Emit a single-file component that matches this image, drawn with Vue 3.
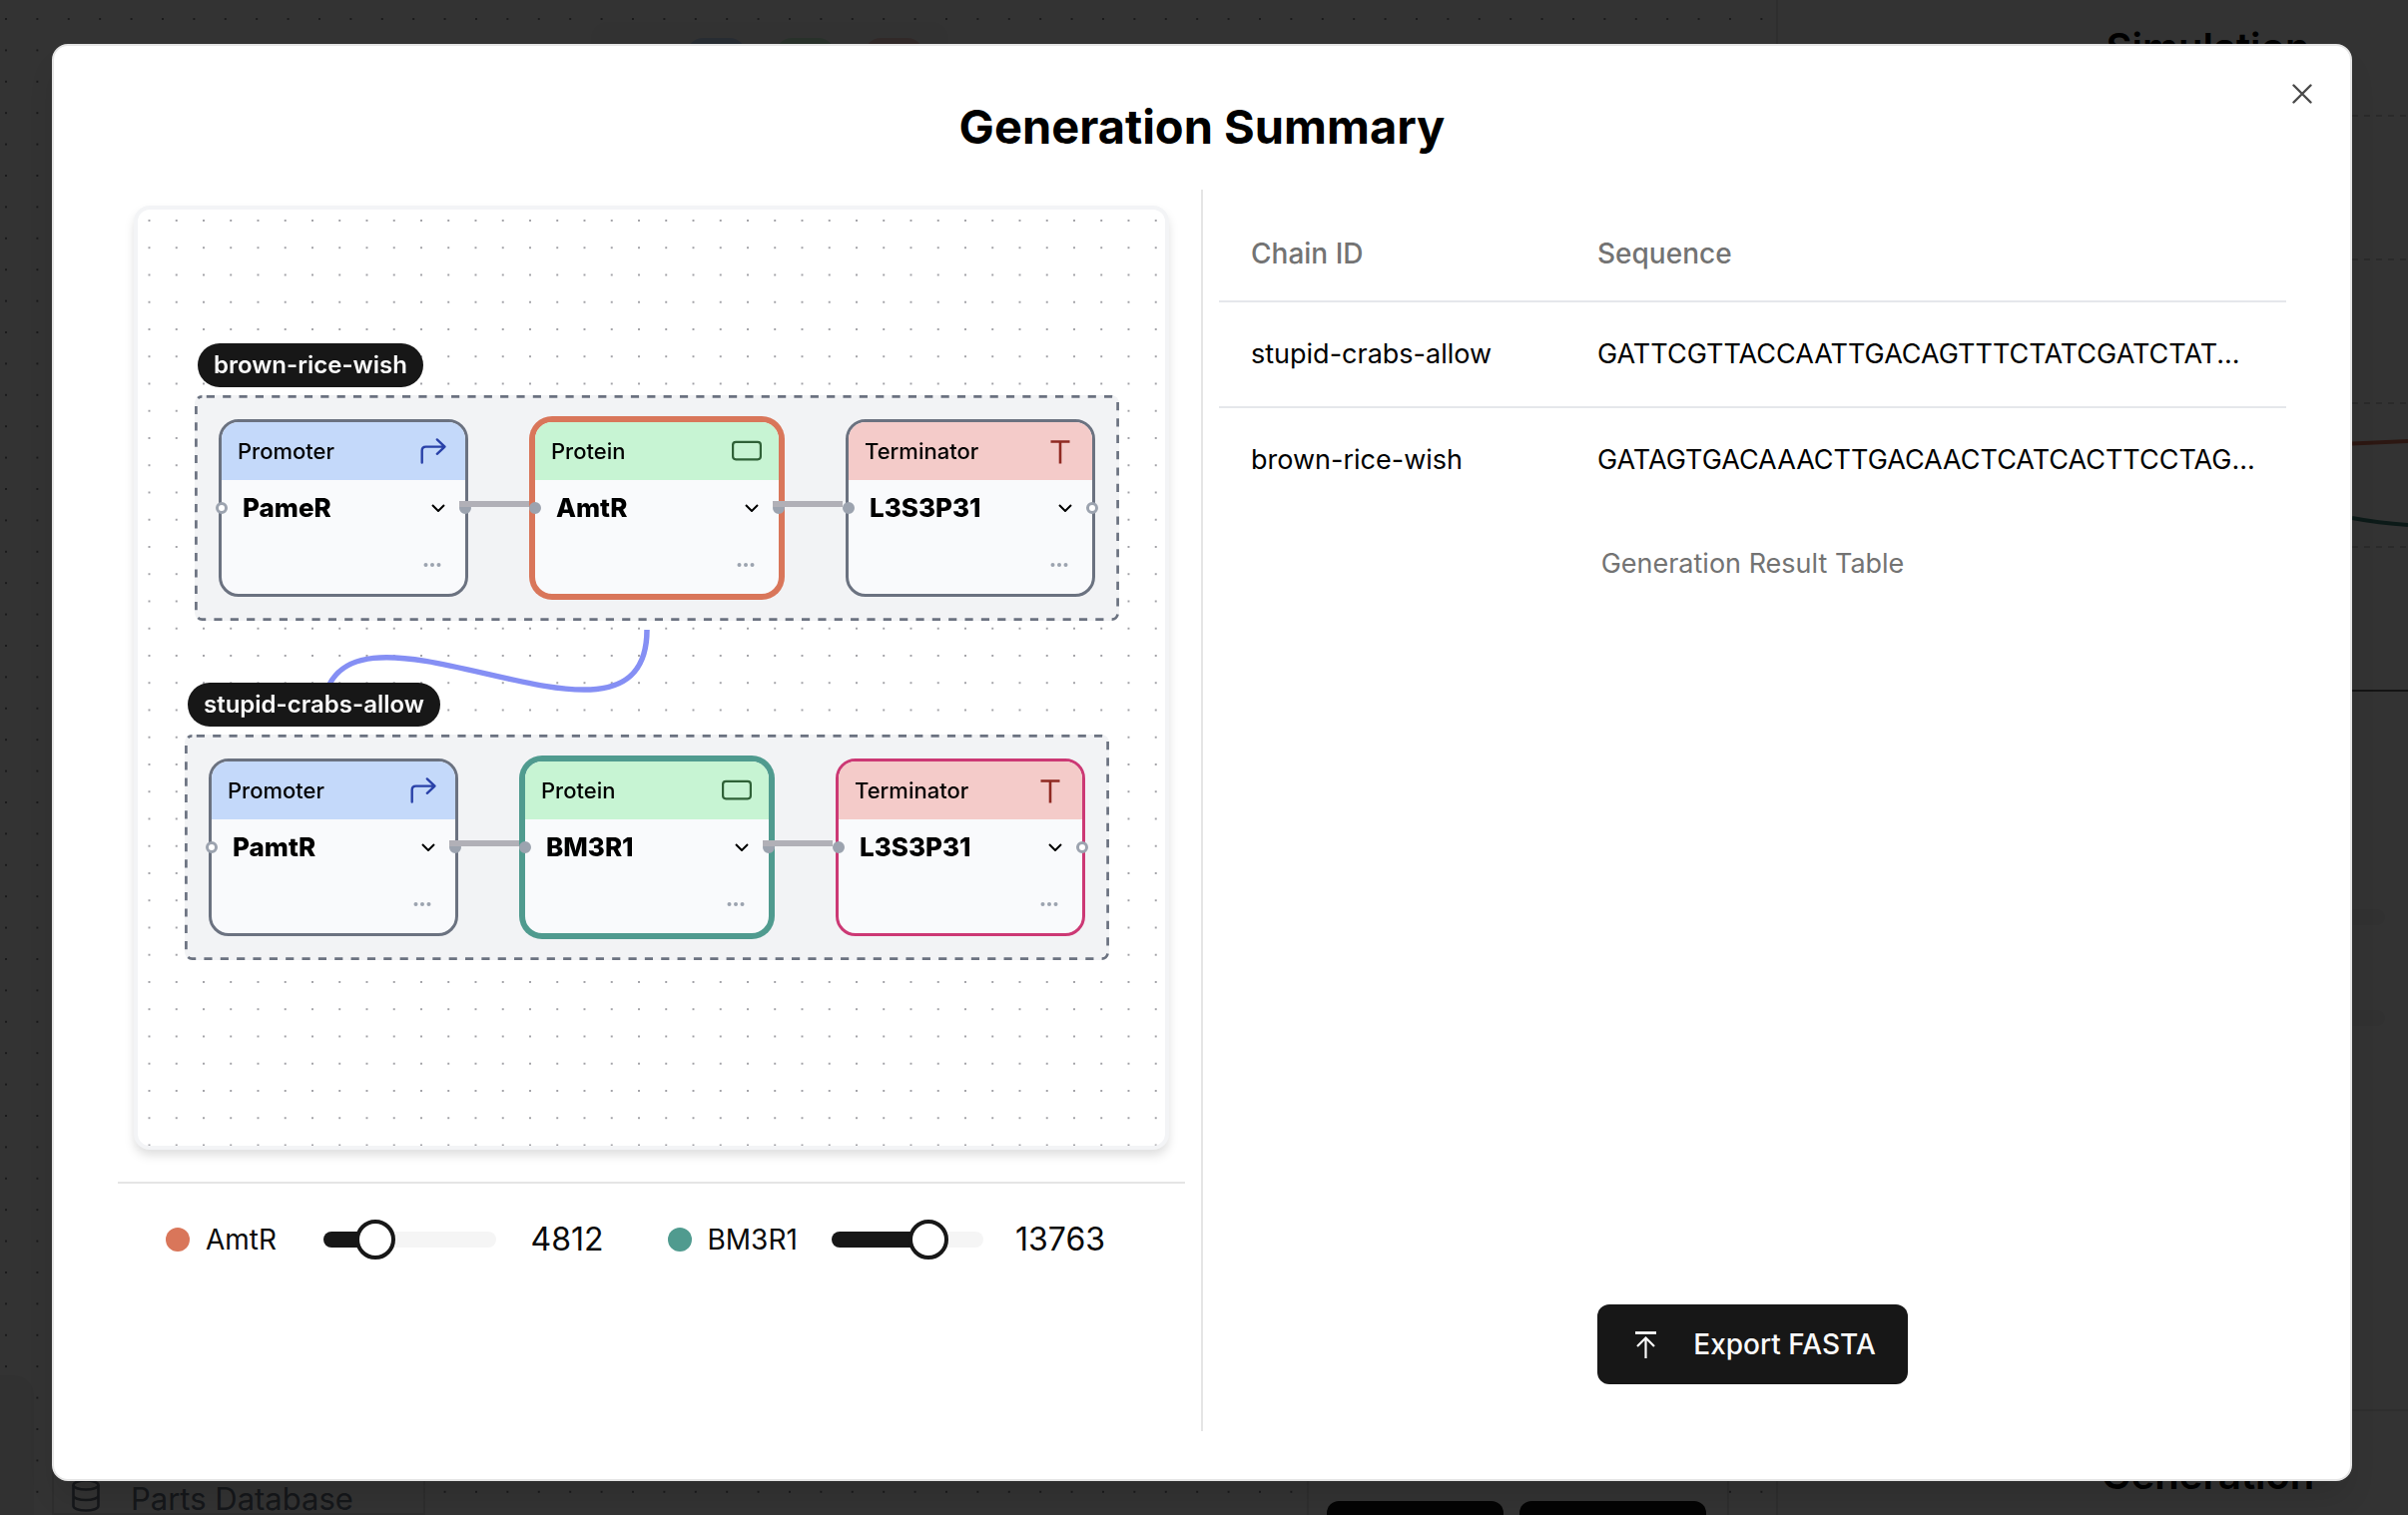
<script setup>
import { ref } from 'vue'

const chains = [
  {
    id: 'brown-rice-wish',
    x: 57,
    y: 186,
    parts: [
      { kind: 'Promoter', name: 'PameR', tone: 'plain' },
      { kind: 'Protein', name: 'AmtR', tone: 'orange' },
      { kind: 'Terminator', name: 'L3S3P31', tone: 'plain' },
    ],
  },
  {
    id: 'stupid-crabs-allow',
    x: 47,
    y: 526,
    parts: [
      { kind: 'Promoter', name: 'PamtR', tone: 'plain' },
      { kind: 'Protein', name: 'BM3R1', tone: 'teal' },
      { kind: 'Terminator', name: 'L3S3P31', tone: 'pink' },
    ],
  },
]

const rows = [
  { id: 'stupid-crabs-allow', sequence: 'GATTCGTTACCAATTGACAGTTTCTATCGATCTAT...' },
  { id: 'brown-rice-wish', sequence: 'GATAGTGACAAACTTGACAACTCATCACTTCCTAG...' },
]

const max = 20000
const proteins = ref([
  { name: 'AmtR', color: '#d9765a', value: 4812 },
  { name: 'BM3R1', color: '#509b8f', value: 13763 },
])
</script>

<template>
  <div class="page">
    <div class="workspace" aria-hidden="true">
      <section class="flow">
        <svg class="dots" width="100%" height="100%">
          <pattern id="flow-dots" x="5" y="18" width="31.4" height="31.4" patternUnits="userSpaceOnUse">
            <circle cx="1" cy="1" r="1" fill="#55555c" />
          </pattern>
          <rect width="100%" height="100%" fill="url(#flow-dots)" />
        </svg>
        <div class="palette">
          <i class="chip blue"></i><i class="chip green"></i><i class="chip red"></i>
        </div>
        <div class="dock">
          <span class="minimap"></span>
          <div class="database">
            <svg width="30" height="34" viewBox="0 0 30 34" fill="none" stroke="currentColor" stroke-width="2.6">
              <ellipse cx="15" cy="6" rx="12.5" ry="4.5" />
              <path d="M2.500 6v21c0 2.500 5.600 4.500 12.500 4.500s12.500-2 12.500-4.500V6M2.500 16.500c0 2.500 5.600 4.500 12.500 4.500s12.500-2 12.500-4.500" />
            </svg>
            <span>Parts Database</span>
          </div>
          <div class="actions"><i></i><i></i></div>
        </div>
      </section>
      <aside class="side">
        <h2>Simulation</h2>
        <svg class="chart" viewBox="0 0 56 950" width="56" height="950" fill="none">
          <g stroke="#cfcfcf" stroke-width="2" stroke-dasharray="6 6">
            <path d="M0 46h56M0 190h56M0 334h56M0 478h56" />
          </g>
          <path d="M0 622h56" stroke="#666" stroke-width="2" />
          <path d="M0 374.500L56 372" stroke="#d9765a" stroke-width="4" />
          <path d="M0 449Q26 454 56 456" stroke="#3f8378" stroke-width="4" />
          <path d="M0 849h25M0 950h25" stroke="#f3f3f3" stroke-width="16" stroke-linecap="round" />
        </svg>
        <h2 class="bottom">Generation</h2>
      </aside>
    </div>

    <div class="overlay">
      <div class="modal" role="dialog" aria-labelledby="dialog-title">
        <button class="close" aria-label="Close">
          <svg width="20" height="20" viewBox="0 0 20 20" stroke="currentColor" stroke-width="2.4" stroke-linecap="round">
            <path d="M1.500 1.500l17 17M18.500 1.500l-17 17" />
          </svg>
        </button>
        <h1 id="dialog-title">Generation Summary</h1>

        <div class="columns">
          <section class="circuit">
            <div class="board-wrap">
              <div class="board">
                <svg class="dots" width="100%" height="100%">
                  <pattern id="board-dots" x="10.500" y="10" width="27.250" height="27.250" patternUnits="userSpaceOnUse">
                    <circle cx="1" cy="1" r="0.900" fill="#77777f" />
                  </pattern>
                  <rect width="100%" height="100%" fill="url(#board-dots)" />
                  <path d="M510 421C510 584 185 345 185 510" fill="none" stroke="#858ff4" stroke-width="5.500" />
                </svg>

                <div
                  v-for="chain in chains"
                  :key="chain.id"
                  class="chain"
                  :style="{ left: chain.x + 'px', top: chain.y + 'px' }"
                >
                  <svg class="outline" width="926" height="226" fill="none">
                    <rect x="1.400" y="1.400" width="923.200" height="223.200" rx="6" stroke="#6b7280" stroke-width="2.700" stroke-dasharray="8.170 8.180" stroke-dashoffset="-4.400" />
                  </svg>
                  <span class="tag">{{ chain.id }}</span>
                  <article v-for="(part, i) in chain.parts" :key="i" class="part" :class="part.tone">
                    <header :class="part.kind.toLowerCase()">
                      <span>{{ part.kind }}</span>
                      <svg width="32" height="28" viewBox="0 0 32 28" fill="none" stroke="currentColor">
                        <path v-if="part.kind === 'Promoter'" stroke-width="2.400" stroke-linecap="round" stroke-linejoin="round" d="M4.700 25.500V13.500Q4.700 9.600 8.600 9.600H27.500M19.800 2.400L27.500 9.600L19.800 16.800" />
                        <rect v-else-if="part.kind === 'Protein'" x="2.100" y="4.900" width="27.800" height="17.400" rx="3" stroke-width="2.200" />
                        <path v-else stroke-width="2.600" d="M6.500 4.500h19M16 4.500v22" />
                      </svg>
                    </header>
                    <div class="name">
                      <select :aria-label="part.kind">
                        <option>{{ part.name }}</option>
                      </select>
                      <svg width="14" height="8" viewBox="0 0 14 8" fill="none" stroke="#000" stroke-width="2">
                        <path d="M1 1l6 6l6-6" />
                      </svg>
                    </div>
                    <div class="more">
                      <button aria-label="More options">
                        <svg width="18" height="6" viewBox="0 0 18 6" fill="#9ca3af">
                          <circle cx="2.500" cy="3" r="2" /><circle cx="9" cy="3" r="2" /><circle cx="15.500" cy="3" r="2" />
                        </svg>
                      </button>
                    </div>
                    <i class="handle left" :class="{ linked: i > 0 }"></i>
                    <i class="handle right" :class="{ linked: i < 2 }"></i>
                    <i v-if="i < 2" class="edge"></i>
                  </article>
                </div>
              </div>
            </div>

            <div class="sliders">
              <div v-for="(p, i) in proteins" :key="p.name" class="slider">
                <i class="swatch" :style="{ background: p.color }"></i>
                <label :for="'level-' + i">{{ p.name }}</label>
                <input
                  :id="'level-' + i"
                  v-model.number="p.value"
                  type="range"
                  min="0"
                  :max="max"
                  :style="{ '--fill': (p.value / max) * 100 + '%' }"
                />
                <output :for="'level-' + i">{{ p.value }}</output>
              </div>
            </div>
          </section>

          <div class="divider"></div>

          <section class="result">
            <table>
              <caption>Generation Result Table</caption>
              <thead>
                <tr><th scope="col" class="id">Chain ID</th><th scope="col">Sequence</th></tr>
              </thead>
              <tbody>
                <tr v-for="row in rows" :key="row.id">
                  <td>{{ row.id }}</td>
                  <td>{{ row.sequence }}</td>
                </tr>
              </tbody>
            </table>
            <button class="export">
              <svg width="32" height="32" viewBox="0 0 32 32" fill="none" stroke="currentColor" stroke-width="2.200">
                <path stroke-width="2.800" d="M6 4.500h21" />
                <path d="M16.500 30V10M8 18l8.500-8.500L25 18" />
              </svg>
              Export FASTA
            </button>
          </section>
        </div>
      </div>
    </div>
  </div>
</template>

<style>
body {
  background: #333;
}
</style>

<style scoped>
* {
  box-sizing: border-box;
}
.page {
  position: relative;
  min-height: 100vh;
  font-family: Inter, sans-serif;
  font-size: 28px;
  line-height: 40px;
  color: #0a0a0a;
}
button,
select,
input {
  font: inherit;
  color: inherit;
  margin: 0;
}
svg {
  display: block;
  flex: none;
}

/* Workspace behind the dialog */
.workspace {
  position: absolute;
  inset: 0;
  display: grid;
  grid-template-columns: 1fr 633px;
  overflow: hidden;
  background: #fff;
}
.flow {
  position: relative;
  display: flex;
  flex-direction: column;
  justify-content: space-between;
  min-width: 0;
}
.dots {
  position: absolute;
  inset: 0;
}
.palette {
  position: relative;
  align-self: center;
  display: flex;
  gap: 30px;
  width: 358px;
  height: 80px;
  margin: 22px 238px 0 0;
  padding: 16px 0 0 96px;
  border-radius: 16px;
  background: #f8f8f8;
}
.chip {
  width: 59px;
  height: 40px;
  border-radius: 16px;
}
.chip.blue { background: #c4d9fa; }
.chip.green { background: #c7f4d3; }
.chip.red { background: #f4cbc9; }
.dock {
  position: relative;
  display: flex;
  align-items: flex-end;
  height: 140px;
}
.minimap {
  align-self: stretch;
  width: 34px;
  border-radius: 0 20px 0 0;
  background: #f5f5f5;
}
.database {
  display: flex;
  align-items: flex-end;
  gap: 30px;
  width: 374px;
  height: 60px;
  margin-left: 18px;
  padding-left: 17px;
  border: solid #e5e5e5;
  border-width: 0 2px 2px;
  background: #fff;
  color: #6b7280;
  font-size: 31px;
  line-height: 28px;
  white-space: nowrap;
}
.actions {
  display: flex;
  gap: 16px;
  width: 423px;
  height: 60px;
  margin: 0 47px 0 auto;
  padding: 46px 20px 0 18px;
  border: solid #e5e5e5;
  border-width: 0 2px;
  background: #fff;
}
.actions i {
  width: 177px;
  border-radius: 12px 12px 0 0;
  background: #171717;
}
.actions i:last-child {
  width: 187px;
}
.side {
  display: flex;
  flex-direction: column;
  border-left: 2px solid #e5e5e5;
}
.side h2 {
  margin: 0;
  padding: 26px 0 0 230px;
  font-size: 40px;
  line-height: 44px;
  font-weight: 600;
  color: #000;
  text-align: center;
}
.chart {
  align-self: flex-end;
  overflow: visible;
}
.side .bottom {
  margin-top: auto;
  height: 106px;
  padding-top: 42px;
  border-top: 2px solid #e5e5e5;
}

/* Dialog */
.overlay {
  position: relative;
  display: flex;
  min-height: 100vh;
  padding: 44px 56px 34px 52px;
  background: rgba(0, 0, 0, 0.8);
}
.modal {
  position: relative;
  flex: 1;
  display: flex;
  flex-direction: column;
  min-width: 0;
  padding: 48px 64px;
  border: 2px solid #e5e5e5;
  border-radius: 16px;
  background: #fff;
  box-shadow: 0 20px 30px -6px rgba(0, 0, 0, 0.12);
}
h1 {
  margin: 0 0 30px;
  font-size: 47px;
  line-height: 66px;
  font-weight: 700;
  color: #000;
  text-align: center;
}
.close {
  position: absolute;
  top: 32px;
  right: 32px;
  display: grid;
  place-items: center;
  width: 32px;
  height: 32px;
  padding: 0;
  border: 0;
  background: none;
  color: #4a4a4a;
}
.columns {
  flex: 1;
  display: grid;
  grid-template-columns: minmax(0, 1fr) 2px minmax(0, 1fr);
  gap: 16px;
}
.divider {
  background: #e5e5e5;
}

/* Circuit board */
.board-wrap {
  padding: 16px;
  filter: drop-shadow(0 6px 5px rgba(0, 0, 0, 0.12));
}
.board {
  position: relative;
  min-height: 946px;
  border: 4px solid #f3f4f6;
  border-radius: 16px;
  overflow: hidden;
  background: #fff;
}
.chain {
  position: absolute;
  display: flex;
  gap: 64px;
  padding: 24px;
  border-radius: 8px;
  background: #f2f3f5;
}
.outline {
  position: absolute;
  top: 0;
  left: 0;
}
.tag {
  position: absolute;
  top: -52px;
  left: 3px;
  padding: 0 16px;
  border-radius: 22px;
  background: #171717;
  color: #fafafa;
  font-size: 24px;
  line-height: 44px;
  font-weight: 600;
  white-space: nowrap;
}
.part {
  position: relative;
  width: 250px;
  border: 3px solid #6b7280;
  border-radius: 20px;
  background: #f9fafc;
}
.part.orange {
  border-color: #d9765a;
  box-shadow: 0 0 0 3px #d9765a;
}
.part.teal {
  border-color: #509b8f;
  box-shadow: 0 0 0 3px #509b8f;
}
.part.pink {
  border-color: #cc3874;
}
.part header {
  display: flex;
  align-items: center;
  justify-content: space-between;
  height: 58px;
  padding: 0 16px;
  border-radius: 17px 17px 0 0;
  font-size: 22px;
  font-weight: 500;
  color: #000;
}
.promoter { background: #c4d9fa; }
.protein { background: #c7f4d3; }
.terminator { background: #f4cbc9; }
.promoter svg { color: #2941a8; }
.protein svg { color: #2f6137; }
.terminator svg { color: #8f2a22; }
.name {
  display: flex;
  align-items: center;
  height: 56px;
  padding: 0 20px 0 21px;
}
.name select {
  flex: 1;
  min-width: 0;
  padding: 0;
  border: 0;
  appearance: none;
  background: none;
  font-size: 26px;
  line-height: 32px;
  font-weight: 800;
  color: #000;
}
.more {
  display: flex;
  align-items: center;
  justify-content: flex-end;
  height: 58px;
  padding: 0 24px;
}
.more button {
  padding: 0;
  border: 0;
  background: none;
}
.handle {
  position: absolute;
  top: 80px;
  width: 12px;
  height: 12px;
  border: 3px solid #9ca3af;
  border-radius: 50%;
  background: #fff;
}
.handle.linked {
  background: #9ca3af;
}
.handle.left { left: -6px; }
.handle.right { right: -6px; }
.edge {
  position: absolute;
  top: 79px;
  left: 238px;
  width: 70px;
  height: 6px;
  background: #b1b0b7;
}

/* Sliders */
.sliders {
  display: grid;
  grid-template-columns: 1fr 1fr;
  gap: 64px;
  margin-top: 16px;
  padding: 36px 80px 36px 48px;
  border-top: 2px solid #e5e5e5;
}
.slider {
  display: flex;
  align-items: center;
}
.swatch {
  width: 24px;
  height: 24px;
  margin-right: 16px;
  border-radius: 50%;
}
.slider label {
  min-width: 84px;
}
.slider input {
  flex: 1;
  min-width: 0;
  height: 16px;
  margin: 0 32px 0 34px;
  appearance: none;
  border-radius: 8px;
  background: linear-gradient(to right, #171717 var(--fill), #f5f5f5 var(--fill));
}
.slider input::-webkit-slider-thumb {
  appearance: none;
  width: 40px;
  height: 40px;
  border: 4px solid #171717;
  border-radius: 50%;
  background: #fff;
}
.slider output {
  min-width: 76px;
  font-size: 32px;
  text-align: right;
}

/* Result table */
.result {
  display: flex;
  flex-direction: column;
  align-items: center;
  padding: 16px 0 47px;
}
table {
  width: 100%;
  table-layout: fixed;
  border-collapse: collapse;
  color: #000;
}
caption {
  caption-side: bottom;
  padding-top: 32px;
  font-size: 27px;
  color: #737373;
}
.id {
  width: 347px;
}
th {
  height: 96px;
  padding: 0 32px;
  font-weight: 500;
  text-align: left;
  color: #737373;
}
td {
  padding: 32px;
  font-size: 27px;
  white-space: nowrap;
}
thead tr,
tbody tr:not(:last-child) {
  border-bottom: 2px solid #e5e7eb;
}
.export {
  display: flex;
  align-items: center;
  gap: 32px;
  height: 80px;
  margin-top: auto;
  padding: 0 32px;
  border: 0;
  border-radius: 12px;
  background: #171717;
  color: #fafafa;
  font-weight: 500;
}
</style>
